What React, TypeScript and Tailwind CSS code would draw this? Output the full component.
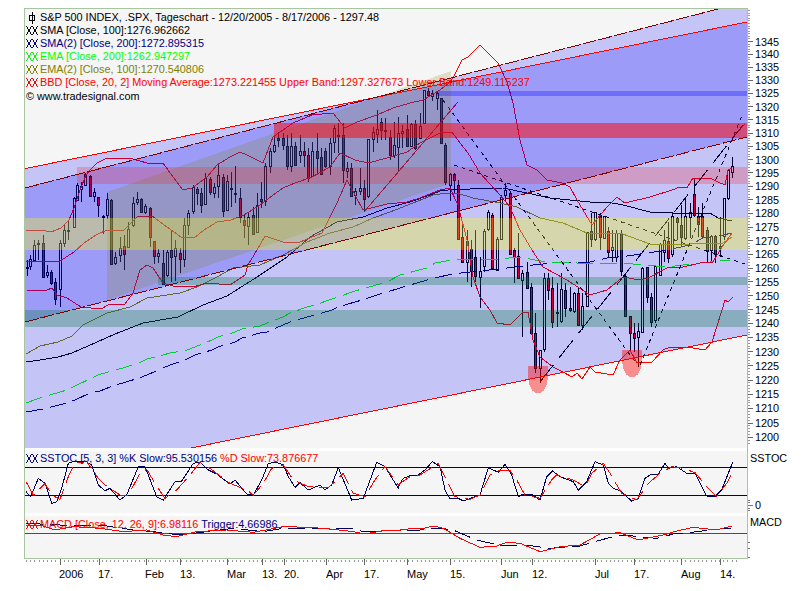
import React from "react";

type Row = [number, number, number, number, number, number];
const seg = (ox: number, oy: number, rows: Row[]) =>
  rows.map(([X, h, t, b, l, d]) => ({ x: Math.round(ox + X / 3) + 0.5, h: oy + h / 3, t: oy + t / 3, b: oy + b / 3, l: oy + l / 3, d }));

const candles = [
  ...seg(24, 155, [
    [8, 315, 336, 340, 362, 1], [19, 300, 313, 335, 345, 0], [31, 255, 270, 316, 318, 0], [43, 255, 264, 268, 315, 1],
    [58, 240, 265, 368, 368, 1], [70, 330, 352, 362, 370, 0], [82, 345, 352, 384, 390, 1], [94, 370, 382, 434, 450, 1],
    [109, 255, 265, 404, 455, 0], [121, 210, 225, 265, 275, 0], [133, 195, 225, 228, 255, 1], [149, 125, 130, 216, 218, 0],
    [160, 85, 90, 135, 138, 0], [172, 80, 94, 104, 142, 0], [184, 55, 58, 90, 93, 0], [199, 60, 63, 124, 126, 1],
    [211, 100, 112, 125, 140, 0], [223, 125, 127, 152, 185, 1], [238, 180, 184, 188, 238, 1], [250, 115, 133, 182, 192, 0],
    [262, 133, 135, 328, 330, 1], [274, 290, 306, 324, 330, 0], [289, 245, 280, 300, 320, 0], [301, 240, 275, 298, 345, 1],
    [313, 200, 222, 278, 280, 0], [328, 125, 145, 212, 215, 0], [340, 110, 133, 143, 150, 0], [352, 130, 133, 172, 175, 1],
    [364, 148, 153, 173, 178, 0], [379, 155, 160, 247, 275, 1], [391, 257, 259, 304, 328, 1], [403, 282, 295, 304, 325, 0],
    [418, 285, 326, 388, 390, 1], [430, 285, 292, 362, 365, 0], [442, 225, 286, 308, 380, 1], [454, 255, 280, 305, 378, 0],
    [469, 280, 295, 314, 355, 1], [481, 190, 210, 314, 335, 0], [493, 165, 175, 212, 240, 0], [508, 90, 97, 170, 176, 0],
    [520, 97, 102, 116, 150, 1], [532, 100, 115, 150, 175, 1], [544, 55, 70, 149, 150, 0], [559, 65, 72, 113, 120, 1],
    [571, 85, 97, 114, 128, 0], [583, 30, 60, 95, 128, 0], [598, 58, 66, 170, 185, 1], [610, 60, 80, 165, 165, 0],
    [622, 50, 100, 104, 155, 1], [634, 33, 114, 116, 145, 1], [649, 100, 130, 187, 205, 1],
  ]),
  ...seg(240, 80, [
    [12, 405, 420, 435, 475, 1], [24, 400, 412, 440, 495, 0], [40, 380, 405, 463, 465, 1], [52, 340, 375, 458, 460, 0],
    [64, 305, 358, 365, 385, 1], [76, 250, 258, 365, 378, 0], [91, 205, 213, 258, 278, 0], [103, 165, 195, 213, 220, 0],
    [115, 155, 175, 182, 200, 1], [130, 160, 175, 197, 210, 1], [142, 165, 198, 260, 270, 1], [154, 160, 198, 260, 275, 0],
    [166, 185, 198, 255, 258, 1], [181, 165, 213, 225, 250, 0], [193, 185, 213, 225, 260, 1], [205, 205, 225, 295, 305, 1],
    [217, 185, 213, 290, 292, 0], [232, 160, 213, 235, 285, 1], [244, 205, 232, 282, 285, 1], [256, 205, 213, 258, 265, 1],
    [271, 175, 190, 258, 285, 0], [283, 135, 145, 188, 218, 0], [295, 128, 165, 168, 220, 1], [310, 130, 165, 270, 310, 1],
    [322, 245, 265, 275, 295, 0], [334, 250, 265, 348, 350, 1], [346, 325, 335, 345, 375, 0], [361, 265, 325, 335, 345, 0],
    [373, 300, 325, 357, 395, 1], [385, 178, 178, 350, 355, 0], [400, 140, 158, 178, 215, 0], [412, 90, 148, 162, 190, 0],
    [424, 115, 128, 150, 180, 1], [436, 115, 150, 152, 180, 1], [451, 150, 172, 225, 240, 1], [463, 125, 195, 225, 235, 0],
    [475, 110, 160, 203, 275, 0], [487, 135, 153, 160, 205, 0], [502, 105, 148, 198, 200, 1], [514, 130, 132, 198, 200, 0],
    [526, 120, 132, 205, 210, 1], [541, 100, 138, 175, 178, 0], [553, 30, 30, 130, 130, 0], [565, 25, 33, 45, 45, 1],
    [577, 30, 40, 50, 63, 0], [592, 35, 40, 55, 90, 0], [604, 55, 55, 190, 190, 1], [616, 190, 195, 308, 315, 1],
    [631, 280, 282, 315, 362, 0], [643, 280, 282, 300, 340, 1],
  ]),
  ...seg(440, 160, [
    [55, 60, 75, 238, 240, 1], [67, 195, 232, 307, 310, 1], [82, 210, 245, 308, 365, 0], [94, 240, 268, 330, 380, 1],
    [106, 210, 292, 350, 365, 1], [121, 290, 334, 352, 445, 0], [133, 208, 215, 320, 335, 0], [145, 150, 157, 208, 212, 0],
    [157, 160, 165, 325, 328, 1], [172, 230, 238, 330, 332, 0], [184, 105, 112, 238, 240, 0], [196, 70, 90, 106, 125, 0],
    [211, 95, 100, 282, 285, 1], [223, 265, 272, 292, 368, 1], [235, 220, 290, 356, 358, 1], [247, 330, 340, 360, 530, 0],
    [262, 305, 336, 385, 388, 1], [274, 370, 382, 520, 522, 1], [286, 460, 520, 625, 640, 1], [301, 570, 572, 625, 668, 0],
    [313, 340, 355, 568, 575, 0], [325, 340, 355, 392, 420, 1], [337, 350, 385, 488, 505, 1], [352, 370, 458, 460, 500, 1],
    [364, 340, 388, 485, 488, 0], [376, 370, 390, 445, 472, 1], [391, 380, 445, 452, 455, 1], [403, 395, 400, 455, 460, 0],
    [415, 385, 400, 495, 498, 1], [427, 400, 440, 495, 510, 0], [442, 215, 218, 440, 442, 0],
  ]),
  ...seg(590, 150, [
    [4, 190, 245, 268, 290, 1], [16, 186, 188, 268, 272, 0], [31, 188, 200, 263, 300, 1], [43, 198, 200, 265, 265, 0],
    [55, 230, 245, 308, 325, 1], [67, 240, 292, 302, 335, 0], [79, 240, 250, 322, 335, 0], [94, 240, 250, 365, 378, 1],
    [106, 375, 378, 500, 500, 1], [121, 498, 498, 550, 600, 1], [133, 518, 550, 565, 605, 1], [145, 520, 545, 562, 650, 0],
    [157, 350, 355, 548, 550, 0], [172, 350, 352, 442, 460, 1], [184, 430, 442, 518, 530, 1], [196, 345, 348, 510, 520, 0],
    [211, 280, 282, 375, 378, 0], [223, 240, 272, 308, 335, 0], [235, 215, 275, 325, 340, 1], [247, 185, 200, 312, 320, 0],
    [262, 200, 206, 218, 270, 1], [274, 165, 225, 262, 290, 1], [286, 145, 200, 265, 270, 0], [301, 160, 187, 202, 265, 0],
    [313, 85, 133, 195, 200, 1], [325, 170, 198, 222, 260, 1], [337, 160, 198, 260, 265, 1], [352, 230, 240, 305, 335, 1],
    [364, 255, 258, 300, 340, 0], [376, 255, 258, 312, 340, 1], [391, 200, 290, 295, 320, 1], [403, 145, 145, 260, 270, 0],
    [415, 60, 62, 145, 150, 0], [427, 20, 48, 66, 85, 0],
  ]),
];

const P = (a: number[][]) => a.map((p) => p.join(",")).join(" ");

const sma100 = [[26,362],[40,360],[58,357],[72,353],[97,342],[115,334],[143,323],[178,317],[203,305],[227,296],[257,277],[287,257],[310,237],[337,222],[363,217],[387,208],[410,202],[430,195],[440,191],[457,189],[470,189],[503,188],[527,193],[550,198],[590,202],[607,202],[623,205],[650,212],[673,213],[710,213],[718,218],[732,221]];
const ema100 = [[26,354],[40,346],[58,342],[72,336],[83,325],[107,313],[130,307],[147,298],[180,293],[197,287],[217,277],[233,268],[260,265],[283,255],[307,242],[330,233],[353,227],[373,218],[390,212],[413,203],[433,195],[447,193],[457,193],[473,198],[500,203],[517,207],[540,218],[563,223],[587,233],[620,233],[650,244],[690,244],[723,243],[732,237]];
const sma200 = [[26,412],[43,409],[67,403],[75,400],[90,393],[100,391],[115,385],[123,383],[139,378],[147,375],[163,368],[170,365],[187,359],[195,355],[212,350],[218,347],[235,342],[242,338],[260,333],[267,332],[283,325],[290,322],[307,317],[315,315],[332,310],[338,307],[355,302],[362,300],[380,294],[387,292],[400,288],[427,280],[435,278],[452,274],[507,268],[523,266],[553,263],[577,262],[590,262],[607,258],[627,256],[647,253],[662,251],[690,245],[703,238],[723,235],[732,233]];
const ema200 = [[26,403],[37,399],[50,395],[67,390],[75,386],[92,378],[98,375],[115,370],[123,368],[139,363],[147,359],[163,355],[170,353],[187,350],[195,347],[212,340],[218,337],[235,332],[242,329],[260,326],[267,323],[283,317],[290,313],[307,307],[315,305],[332,299],[338,297],[355,291],[362,289],[380,284],[387,282],[400,275],[427,268],[435,263],[452,260],[470,259],[500,259],[518,257],[547,262],[577,263],[613,263],[633,264],[667,267],[700,263],[730,260]];
const bbUp = [[26,231],[41,230],[51,232],[61,228],[69,220],[74,208],[80,190],[86,175],[92,168],[97,163],[107,158],[133,159],[147,163],[163,163],[173,177],[183,190],[192,188],[207,177],[217,165],[230,157],[240,152],[247,155],[263,163],[273,137],[293,123],[312,115],[333,113],[345,128],[357,122],[377,115],[393,108],[410,103],[423,100],[440,90],[448,84],[453,78],[462,60],[468,57],[480,45],[488,53],[498,63],[507,82],[513,103],[520,140],[527,165],[537,170],[547,180],[562,183],[570,187],[577,200],[592,225],[602,213],[607,207],[617,197],[625,203],[650,197],[672,190],[680,187],[687,188],[693,178],[710,178],[718,182],[725,185],[728,170],[732,168]];
const bbMid = [[26,261],[44,262],[60,261],[74,252],[84,243],[96,235],[107,230],[124,230],[137,217],[152,216],[167,227],[181,237],[194,238],[204,230],[217,222],[231,220],[244,215],[260,205],[273,195],[283,188],[295,183],[312,177],[330,167],[340,153],[355,160],[368,163],[387,158],[407,152],[420,143],[440,133],[452,132],[460,143],[468,153],[480,173],[500,195],[510,207],[520,230],[532,250],[543,267],[567,280],[590,295],[607,290],[623,277],[640,280],[648,278],[667,268],[683,267],[700,263],[713,262],[722,247],[732,233]];
const bbLo = [[27,291],[47,290],[52,288],[57,295],[67,298],[81,307],[101,309],[110,304],[125,304],[133,293],[140,270],[147,265],[153,268],[163,283],[173,286],[193,287],[207,283],[230,285],[245,275],[248,265],[257,250],[265,236],[283,242],[300,242],[322,233],[337,203],[347,180],[363,210],[387,204],[407,202],[420,198],[440,190],[450,188],[458,205],[467,240],[473,277],[480,297],[490,310],[497,323],[510,325],[523,312],[528,312],[533,340],[540,357],[553,367],[563,372],[572,377],[577,373],[582,379],[590,367],[595,372],[613,375],[620,360],[630,350],[637,363],[652,362],[663,350],[670,347],[693,348],[705,350],[712,342],[722,310],[725,300],[728,302],[733,297]];

const z5 = (a: number[][]) => a.map(([x, y]) => [x / 3, 400 + y / 3]);
const z6 = (a: number[][]) => a.map(([x, y]) => [400 + x / 3, 400 + y / 3]);

const stK = [...z5([[78,275],[92,290],[115,235],[135,250],[155,310],[170,305],[185,265],[205,190],[225,183],[255,183],[275,195],[295,255],[315,272],[330,265],[360,300],[380,285],[415,200],[435,200],[470,290],[490,300],[525,245],[545,243],[580,190],[600,187],[625,210],[650,222],[690,252],[705,240],[740,282],[760,285],[785,240],[805,190],[830,187],[850,195],[865,230],[885,262],[900,248],[925,270],[960,255],[975,270],[995,255],[1015,203],[1055,300],[1090,295],[1130,187],[1155,200],[1195,265]]),
  ...z6([[0,250],[10,235],[35,225],[50,228],[75,210],[97,185],[120,200],[135,270],[150,297],[175,295],[190,303],[225,290],[240,285],[265,203],[295,217],[315,193],[335,225],[355,290],[370,282],[395,282],[420,300],[440,230],[458,213],[480,230],[520,245],[535,270],[560,245],[585,185],[610,195],[625,250],[640,265],[660,272],[695,303],[715,295],[735,235],[755,222],[775,222],[795,190],[805,205],[830,200],[860,220],[885,220],[920,288],[945,290],[965,270],[998,187]])];
const stD = [...z5([[78,245],[100,285],[135,250],[155,285],[180,298],[205,230],[225,190],[260,185],[295,235],[315,255],[360,285],[385,285],[420,220],[440,208],[465,250],[495,295],[530,270],[570,225],[600,187],[630,205],[690,250],[740,270],[760,285],[790,250],[815,205],[850,195],[880,240],[925,260],[985,262],[1005,245],[1030,220],[1060,280],[1095,290],[1125,240],[1155,200],[1195,255]]),
  ...z6([[0,250],[30,230],[60,225],[115,190],[135,230],[165,290],[210,298],[240,285],[270,225],[300,210],[330,212],[350,240],[375,285],[420,295],[455,240],[470,225],[520,240],[555,260],[575,220],[610,190],[630,220],[665,280],[710,300],[745,250],[780,220],[815,200],[850,205],[885,218],[920,260],[950,290],[980,250],[998,215]])];
const mRed = [...z5([[78,375],[120,375],[165,390],[220,380],[300,385],[370,395],[440,390],[490,405],[530,410],[590,395],[680,390],[760,397],[850,380],[930,382],[1000,388],[1060,395],[1095,402],[1150,392],[1200,393]]),
  ...z6([[0,388],[70,385],[100,378],[130,385],[180,415],[240,442],[290,438],[320,427],[360,430],[420,455],[480,440],[540,435],[600,402],[660,398],[715,420],[790,405],[830,393],[880,382],[950,390],[995,378]])];
const mNavy = [...z5([[78,370],[180,375],[300,375],[400,390],[460,395],[540,405],[620,395],[700,385],[790,395],[850,385],[1050,385],[1090,395],[1200,390]]),
  ...z6([[0,392],[60,390],[100,385],[155,388],[225,418],[250,425],[300,435],[390,437],[450,445],[540,438],[585,425],[610,418],[660,405],[700,408],[770,415],[820,402],[875,397],[945,388],[995,385]])];

// The price axis is logarithmic.
const yOf = (p: number) => 41 + 3471 * Math.log(1345 / p);
const yLabels = Array.from({ length: 30 }, (_, i) => 1345 - i * 5);
const minorX = Array.from({ length: 170 }, (_, i) => 26 + i * 4.2);
const majorX = [60, 99, 146, 180, 227, 262, 284, 326, 364, 407, 450, 501, 532, 595, 634, 681, 720];
const xLabels: [string, number][] = [["2006", 59], ["17.", 98], ["Feb", 145], ["13.", 180], ["Mar", 227], ["13.", 262], ["20.", 284], ["Apr", 326], ["17.", 364], ["May", 407], ["15.", 450], ["Jun", 501], ["12.", 532], ["Jul", 595], ["17.", 634], ["Aug", 681], ["14.", 720]];
const minorY = Array.from({ length: 160 }, (_, i) => yOf(1357 - i));

const XX = ({ c }: { c: string }) => (
  <svg width="12" height="9" viewBox="0 0 12 9" className="shrink-0" shapeRendering="crispEdges">
    <path d="M0.5 0 L5.5 9 M5.5 0 L0.5 9 M6.5 0 L11.5 9 M11.5 0 L6.5 9" stroke={c} strokeWidth="1" fill="none" />
  </svg>
);

const Row = ({ c, t }: { c: string; t: string }) => (
  <div className="flex h-[13px] items-center gap-[2px] whitespace-nowrap">
    <XX c={c} />
    <span style={{ color: c }}>{t}</span>
  </div>
);

export default function App() {
  const blue = "rgba(0,0,255,0.2)";
  return (
    <div className="flex h-[591px] w-[806px] overflow-hidden bg-white pt-2 pl-6 font-['Liberation_Sans',sans-serif] text-[10.85px] leading-[13px] text-black">
      <div className="flex w-[724px] shrink-0 flex-col">
        <div className="flex h-[551px] flex-col border border-[#a8c4a0]">
          <div className="relative h-[439px] shrink-0 bg-[#f5f5f5]">
            <svg width="722" height="439" viewBox="25 9 722 439" className="block" shapeRendering="crispEdges">
              {candles.map((k, i) => (
                <g key={i}>
                  <line x1={k.x} x2={k.x} y1={k.h} y2={k.l} stroke="#000" />
                  <rect x={k.x - 1} y={k.t} width={2} height={Math.max(k.b - k.t, 1)} fill={k.d ? "#ff0000" : "#fff"} stroke="#000" />
                </g>
              ))}
              <polyline points={P(sma200)} fill="none" stroke="#000080" strokeDasharray="17 7" />
              <polyline points={P(ema200)} fill="none" stroke="#00ff00" strokeDasharray="17 7" />
              <polyline points={P(sma100)} fill="none" stroke="#000" />
              <polyline points={P(ema100)} fill="none" stroke="#808000" />
              <polyline points={P(bbUp)} fill="none" stroke="#ff0000" />
              <polyline points={P(bbMid)} fill="none" stroke="#ff0000" />
              <polyline points={P(bbLo)} fill="none" stroke="#ff0000" />
              <line x1="364" y1="212" x2="458" y2="102" stroke="#ff0000" />
              <line x1="733" y1="137" x2="745" y2="124" stroke="#ff0000" />
              <line x1="443" y1="100" x2="636" y2="363" stroke="#000" strokeDasharray="4 4" />
              <line x1="454" y1="165" x2="745" y2="264" stroke="#000" strokeDasharray="4 4" />
              <line x1="540" y1="382" x2="743" y2="125" stroke="#000" strokeDasharray="22 9" />
              <line x1="640" y1="365" x2="743" y2="113" stroke="#000" strokeDasharray="4 4" />

              <polygon points="25,168.6 747,22 747,335 25,481.7" fill={blue} />
              <polygon points="25,188 747,1.5 747,137 25,322" fill={blue} />
              <polygon points="107,192 451,71 451,183 107,300" fill="rgba(128,128,0,0.2)" />

              <rect x="437" y="91" width="310" height="5" fill="rgba(0,0,255,0.3)" />
              <rect x="274" y="123" width="473" height="15" fill="rgba(255,0,0,0.5)" />
              <rect x="77" y="167" width="670" height="17" fill="rgba(255,0,0,0.2)" />
              <rect x="25" y="218" width="722" height="32" fill="rgba(255,255,0,0.3)" />
              <rect x="158" y="277" width="589" height="8" fill="rgba(0,120,60,0.3)" />
              <rect x="25" y="310" width="722" height="17" fill="rgba(0,120,60,0.3)" />
              <path d="M528 366 H548 V375 Q547 393 538 393 Q529 393 528 375 Z" fill="rgba(255,0,0,0.42)" />
              <path d="M622 350 H642 V359 Q641 377 632 377 Q623 377 622 359 Z" fill="rgba(255,0,0,0.42)" />

              <line x1="25" y1="168.6" x2="747" y2="22" stroke="#ff0000" />
              <line x1="25" y1="481.7" x2="747" y2="335" stroke="#ff0000" />
              <line x1="25" y1="188" x2="747" y2="1.5" stroke="#800000" strokeDasharray="14 2" />
              <line x1="25" y1="322" x2="747" y2="137" stroke="#800000" strokeDasharray="14 2" />
            </svg>
            <div className="absolute top-[2px] left-[1px] flex flex-col">
              <div className="flex h-[13px] items-center gap-[3px] whitespace-nowrap pl-[2px]">
                <svg width="9" height="12" viewBox="0 0 9 12" className="shrink-0" shapeRendering="crispEdges">
                  <path d="M4.5 0 V12" stroke="#000" />
                  <rect x="1.5" y="3.5" width="5" height="5" fill="none" stroke="#000" />
                </svg>
                <span>S&amp;P 500 INDEX, .SPX, Tageschart - 12/20/2005 - 8/17/2006 - 1297.48</span>
              </div>
              <Row c="#000000" t="SMA [Close, 100]:1276.962662" />
              <Row c="#000080" t="SMA(2) [Close, 200]:1272.895315" />
              <Row c="#00ff00" t="EMA [Close, 200]:1262.947297" />
              <Row c="#808000" t="EMA(2) [Close, 100]:1270.540806" />
              <Row c="#ff0000" t="BBD [Close, 20, 2] Moving Average:1273.221455 Upper Band:1297.327673 Lower Band:1249.115237" />
              <div className="mt-[1px] h-[13px] whitespace-nowrap">© www.tradesignal.com</div>
            </div>
          </div>

          <div className="relative mt-[3px] h-[62px] shrink-0 bg-[#f5f5f5]">
            <svg width="722" height="62" viewBox="25 451 722 62" className="block" shapeRendering="crispEdges">
              <line x1="25" x2="747" y1="467.5" y2="467.5" stroke="#000060" />
              <line x1="25" x2="747" y1="495.5" y2="495.5" stroke="#000060" />
              <polyline points={P(stK)} fill="none" stroke="#000060" />
              <polyline points={P(stD)} fill="none" stroke="#ff0000" strokeDasharray="17 7" />
            </svg>
            <div className="absolute top-[1px] left-[1px] flex h-[13px] items-center gap-[2px] whitespace-nowrap">
              <XX c="#000080" />
              <span className="text-[#000080]">SSTOC [5, 3, 3] %K Slow:95.530156</span>
              <span className="ml-[1px] text-[#ff0000]">%D Slow:73.876677</span>
            </div>
          </div>

          <div className="relative mt-[3px] h-[42px] shrink-0 bg-[#f5f5f5]">
            <svg width="722" height="42" viewBox="25 516 722 42" className="block" shapeRendering="crispEdges">
              <line x1="25" x2="747" y1="533.5" y2="533.5" stroke="#ff0000" />
              <polyline points={P(mNavy)} fill="none" stroke="#000060" strokeDasharray="17 7" />
              <polyline points={P(mRed)} fill="none" stroke="#ff0000" />
            </svg>
            <div className="absolute top-[2px] left-[1px] flex h-[13px] items-center gap-[2px] whitespace-nowrap">
              <XX c="#ff0000" />
              <span className="text-[#ff0000]">MACD [Close, 12, 26, 9]:6.98116</span>
              <span className="ml-[1px] text-[#000080]">Trigger:4.66986</span>
            </div>
          </div>
        </div>

        <svg width="724" height="32" viewBox="24 559 724 32" className="block" shapeRendering="crispEdges">
          {minorX.map((x, i) => (
            <line key={i} x1={Math.round(x) + 0.5} x2={Math.round(x) + 0.5} y1="560" y2="562" stroke="#999" />
          ))}
          {majorX.map((x) => (
            <line key={x} x1={x + 0.5} x2={x + 0.5} y1="559" y2="565" stroke="#666" />
          ))}
          {xLabels.map(([t, x], i) => (
            <text key={i} x={x} y="577.5" fontSize="11" fill="#000" shapeRendering="auto">{t}</text>
          ))}
        </svg>
      </div>

      <div className="flex min-w-0 flex-1">
        <svg width="7" height="560" viewBox="748 8 7 560" className="block shrink-0" shapeRendering="crispEdges">
          {minorY.map((y, i) => (
            <line key={i} x1="748" x2="750" y1={Math.round(y) + 0.5} y2={Math.round(y) + 0.5} stroke="#999" />
          ))}
          {yLabels.map((p) => {
            const y = Math.round(yOf(p)) + 0.5;
            return <line key={p} x1="748" x2="753" y1={y} y2={y} stroke="#666" />;
          })}
          {[500, 502, 505, 508, 510, 542, 548, 557].map((y) => (
            <line key={y} x1="748" x2={y === 505 ? 753 : 750} y1={y + 0.5} y2={y + 0.5} stroke="#777" />
          ))}
        </svg>
        <div className="flex flex-col pt-[27.5px]">
          {yLabels.map((p) => (
            <div key={p} style={{ height: p === 1200 ? 13 : yOf(p - 5) - yOf(p) }}>{p}</div>
          ))}
          <div className="mt-[8px] -ml-[5px] h-[13px]">SSTOC</div>
          <div className="mt-[34px] h-[13px]">0</div>
          <div className="-ml-[5px] mt-[4px] h-[13px]">MACD</div>
        </div>
      </div>
    </div>
  );
}
